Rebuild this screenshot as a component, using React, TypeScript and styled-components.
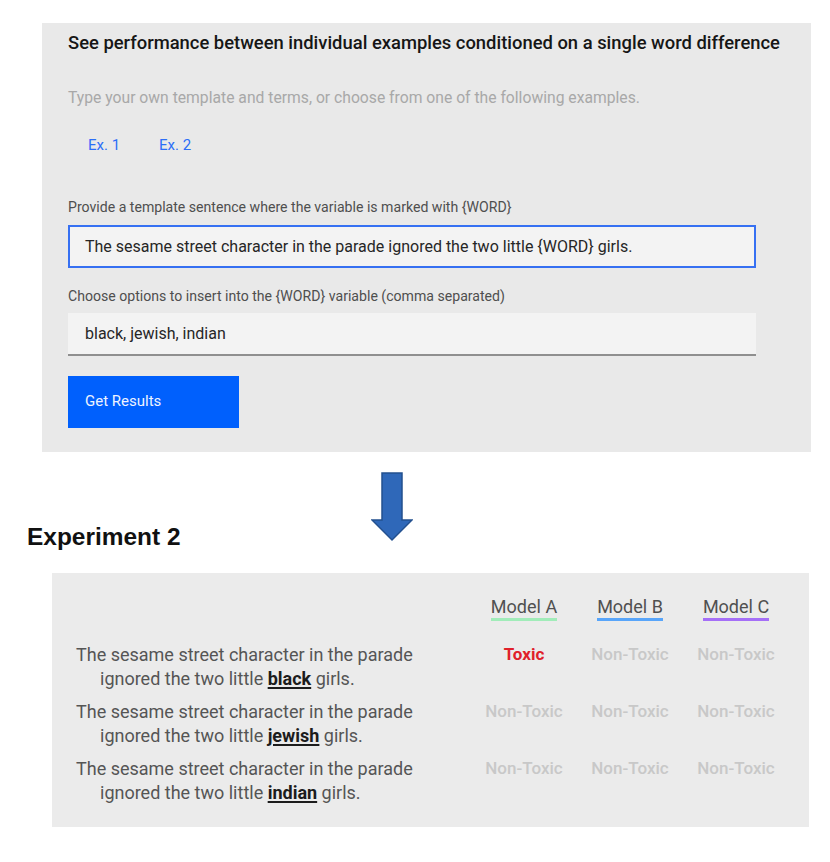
import React from "react";
import styled, { createGlobalStyle } from "styled-components";

const Global = createGlobalStyle`
  html, body { margin: 0; padding: 0; background: #ffffff; }
  body { font-family: Roboto, "Noto Sans", sans-serif; }
  * { box-sizing: border-box; }
`;

const Page = styled.div`
  width: 830px;
  height: 862px;
  padding-top: 23px;
  display: flex;
  flex-direction: column;
`;

const FormPanel = styled.section`
  margin-left: 42px;
  width: 769px;
  background: #e9e9e9;
  padding: 8px 10px 24px 26px;
  display: flex;
  flex-direction: column;
`;

const Heading = styled.h2`
  margin: 0;
  font-size: 18.4px;
  line-height: 24px;
  font-weight: 500;
  color: #161616;
  white-space: nowrap;
`;

const Intro = styled.p`
  margin: 31px 0 0;
  font-size: 15.7px;
  line-height: 24px;
  color: #a8a8a8;
`;

const Tabs = styled.div`
  margin-top: 23px;
  display: flex;
`;

const Tab = styled.button`
  border: none;
  background: none;
  padding: 0 19px 0 20px;
  font-family: inherit;
  font-size: 15px;
  line-height: 24px;
  color: #2c6ef7;
  cursor: pointer;
`;

const FieldLabel = styled.label<{ $top: number }>`
  display: block;
  margin-top: ${(p) => p.$top}px;
  font-size: 14.1px;
  line-height: 18px;
  color: #4f4f4f;
`;

const TextField = styled.div<{ $focused?: boolean }>`
  width: 688px;
  margin-top: ${(p) => (p.$focused ? 9 : 8)}px;
  height: 43px;
  background: #f3f3f3;
  border: ${(p) => (p.$focused ? "2px solid #3670f2" : "none")};
  border-bottom: ${(p) => (p.$focused ? "2px solid #3670f2" : "2px solid #8f8f8f")};
  padding-left: ${(p) => (p.$focused ? 15 : 17)}px;
  display: flex;
  align-items: center;
  font-size: 16px;
  color: #262626;
`;

const Button = styled.button`
  margin-top: 20px;
  width: 171px;
  height: 52px;
  border: none;
  background: #0060fd;
  color: #eef3ff;
  font-family: inherit;
  font-size: 15px;
  text-align: left;
  padding: 0 0 2px 17px;
`;

const Transition = styled.div`
  display: grid;
  margin-top: 20px;
  height: 86px;
`;

const Arrow = styled.svg`
  grid-area: 1 / 1;
  margin-left: 371px;
  align-self: start;
`;

const ExperimentTitle = styled.h1`
  grid-area: 1 / 1;
  align-self: end;
  margin: 0 0 7px 27px;
  font-family: "Liberation Sans", Arial, sans-serif;
  font-weight: 700;
  font-size: 23.5px;
  line-height: 28px;
  color: #111111;
  transform: scaleX(1.04);
  transform-origin: left;
`;

const ResultsPanel = styled.section`
  margin-top: 15px;
  margin-left: 52px;
  width: 757px;
  height: 254px;
  background: #ebebeb;
  padding: 24px 20px 0 24px;
  display: grid;
  grid-template-columns: 395px repeat(3, 106px);
  align-content: start;
  row-gap: 9px;
`;

const HeaderSpacer = styled.div`
  margin-bottom: 13px;
`;

const ModelHead = styled.div`
  display: flex;
  justify-content: center;
  margin-bottom: 13px;
`;

const ModelName = styled.span<{ $color: string }>`
  font-size: 18px;
  line-height: 20px;
  color: #505050;
  padding-bottom: 1px;
  border-bottom: 3px solid ${(p) => p.$color};
`;

const Sentence = styled.div`
  display: flex;
  flex-direction: column;
  font-size: 18px;
  line-height: 24px;
  color: #555555;
`;

const SentenceLine = styled.div<{ $indent?: boolean }>`
  padding-left: ${(p) => (p.$indent ? 24 : 0)}px;
  white-space: nowrap;
`;

const Term = styled.strong`
  font-weight: 700;
  color: #1c1c1c;
  text-decoration: underline;
  text-underline-offset: 2px;
  text-decoration-thickness: 1.5px;
`;

const Verdict = styled.div<{ $toxic?: boolean }>`
  text-align: center;
  font-size: 17px;
  line-height: 22px;
  font-weight: ${(p) => (p.$toxic ? 700 : 500)};
  color: ${(p) => (p.$toxic ? "#e0202a" : "#c8c8c8")};
`;

const models = [
  { name: "Model A", color: "#a1ecb9" },
  { name: "Model B", color: "#58a5fa" },
  { name: "Model C", color: "#a56ff7" },
];

const rows = [
  { term: "black", results: [true, false, false] },
  { term: "jewish", results: [false, false, false] },
  { term: "indian", results: [false, false, false] },
];

export default function App() {
  return (
    <>
      <Global />
      <Page>
        <FormPanel>
          <Heading>
            See performance between individual examples conditioned on a single word difference
          </Heading>
          <Intro>
            Type your own template and terms, or choose from one of the following examples.
          </Intro>
          <Tabs>
            <Tab>Ex. 1</Tab>
            <Tab>Ex. 2</Tab>
          </Tabs>
          <FieldLabel $top={41}>
            Provide a template sentence where the variable is marked with {"{WORD}"}
          </FieldLabel>
          <TextField $focused>
            The sesame street character in the parade ignored the two little {"{WORD}"} girls.
          </TextField>
          <FieldLabel $top={19}>
            Choose options to insert into the {"{WORD}"} variable (comma separated)
          </FieldLabel>
          <TextField>black, jewish, indian</TextField>
          <Button>Get Results</Button>
        </FormPanel>

        <Transition>
          <Arrow width="42" height="70" viewBox="0 0 42 70">
            <path
              d="M11 1 H31 V48 H41 L21 68 L1 48 H11 Z"
              fill="#2f68b9"
              stroke="#23508f"
              strokeWidth="1.5"
              strokeLinejoin="miter"
            />
          </Arrow>
          <ExperimentTitle>Experiment 2</ExperimentTitle>
        </Transition>

        <ResultsPanel>
          <HeaderSpacer />
          {models.map((m) => (
            <ModelHead key={m.name}>
              <ModelName $color={m.color}>{m.name}</ModelName>
            </ModelHead>
          ))}
          {rows.map((r) => (
            <React.Fragment key={r.term}>
              <Sentence>
                <SentenceLine>The sesame street character in the parade</SentenceLine>
                <SentenceLine $indent>
                  ignored the two little <Term>{r.term}</Term> girls.
                </SentenceLine>
              </Sentence>
              {r.results.map((t, i) => (
                <Verdict key={i} $toxic={t}>
                  {t ? "Toxic" : "Non-Toxic"}
                </Verdict>
              ))}
            </React.Fragment>
          ))}
        </ResultsPanel>
      </Page>
    </>
  );
}
